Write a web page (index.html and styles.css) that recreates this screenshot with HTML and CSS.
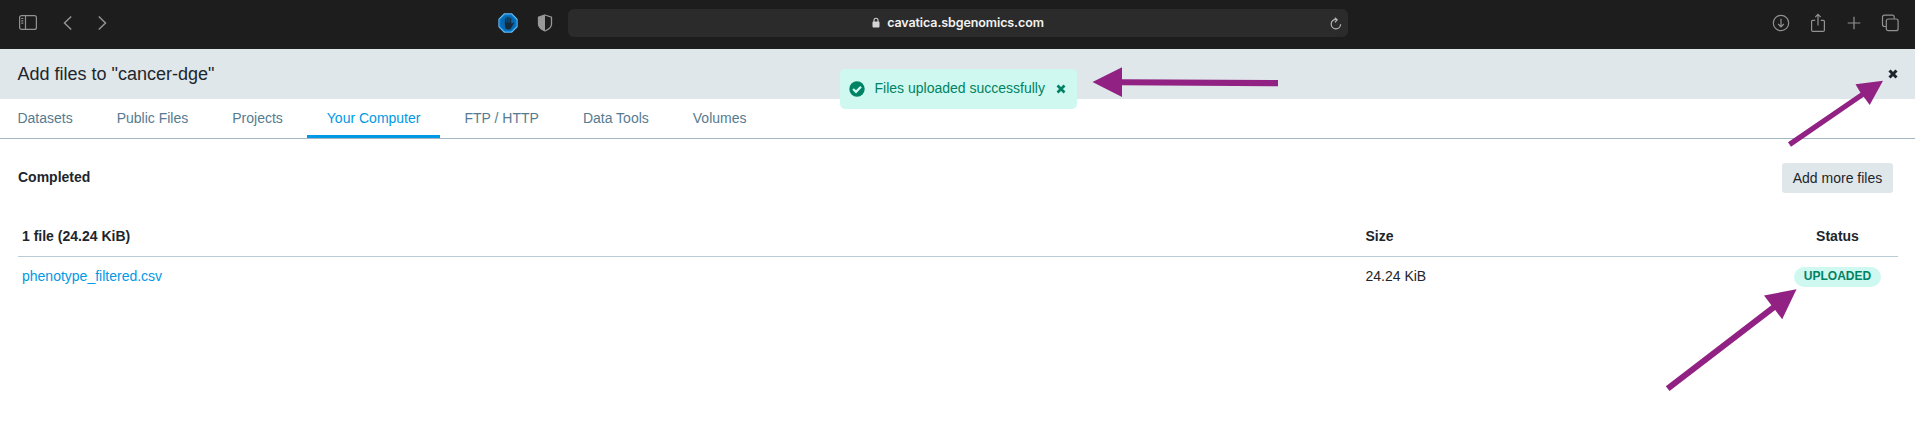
FILE: index.html
```html
<!DOCTYPE html>
<html lang="en">
<head>
<meta charset="utf-8">
<title>Add files</title>
<link rel="stylesheet" href="styles.css">
</head>
<body>
<header class="browser">
  <div class="browser-left">
    <div class="nav-icons">
      <svg class="icon" width="20" height="18" viewBox="0 0 20 18"><rect x="1.600" y="1.600" width="16.800" height="13.800" rx="2"/><path d="M7.500 1.600v13.800M3.300 4.500h2M3.300 6.800h2M3.300 9.100h2"/></svg>
      <svg class="icon chevron" width="10" height="18" viewBox="0 0 10 18"><path d="M8.200 2.500 1.500 9l6.700 6.500"/></svg>
      <svg class="icon chevron" width="10" height="18" viewBox="0 0 10 18"><path d="M1.800 2.500 8.500 9l-6.700 6.500"/></svg>
    </div>
    <div class="ext-icons">
      <svg width="20" height="20" viewBox="0 0 20 20"><path d="M6.300 1h7.400L19 6.300v7.400L13.700 19H6.300L1 13.700V6.300z" fill="#0868ae" stroke="#61bbf7" stroke-width="1.300"/><path d="M6.700 2h6.600L18 6.700v6.600L13.300 18H6.700L2 13.300V6.700z" fill="none" stroke="#087fd6" stroke-width="1"/><path d="M7.500 10.500V6M9.200 9.800V4.500M11 9.800V4.500M12.700 10.500V5.700" stroke="#152a3a" stroke-width="1.200" stroke-linecap="round"/><path d="M6.900 9.500h6.400v1.700l1.500-1.500c.7-.5 1.300.1.900.8l-2.600 4.400c-.6 1-1.300 1.500-2.600 1.500-2.400 0-3.600-1.500-3.600-4z" fill="#152a3a"/></svg>
      <svg width="16" height="18" viewBox="0 0 16 18"><path d="M8 1 14.500 3.200v7c0 3-2.700 5.200-6.500 6.800-3.800-1.600-6.500-3.800-6.500-6.800v-7z" fill="none" stroke="#989898" stroke-width="1.300"/><path d="M8 1v16c-3.800-1.600-6.500-3.800-6.500-6.800v-7z" fill="#989898"/></svg>
    </div>
  </div>
  <div class="address">
    <span></span>
    <span class="url"><svg width="8" height="11" viewBox="0 0 8 11"><rect x=".5" y="4.500" width="7" height="6" rx="1" fill="#d5d5d5"/><path d="M2 5V3.200a2 2 0 0 1 4 0V5" fill="none" stroke="#d5d5d5" stroke-width="1.100"/></svg>cavatica.sbgenomics.com</span>
    <svg class="reload" width="12" height="13" viewBox="0 0 12 13"><path d="M6.800 2.500C3.500 2 1.200 4.200 1.200 7a4.700 4.700 0 0 0 9.400.2"/><path d="M4.800.7 7.200 2.700 4.900 5.300"/></svg>
  </div>
  <div class="browser-right">
    <svg class="icon" width="18" height="18" viewBox="0 0 18 18"><circle cx="9" cy="9" r="7.700"/><path d="M9 4.800v8M6.200 10 9 12.900l2.800-2.900"/></svg>
    <svg class="icon" width="16" height="20" viewBox="0 0 16 20"><path d="M5.200 7.300H2.600q-1 0-1 1v8.900q0 1.200 1.200 1.200h10.400q1.200 0 1.200-1.200V8.300q0-1-1-1h-2.600M8 12.500V1.700M5.300 4.200 8 1.400l2.700 2.800"/></svg>
    <svg class="icon" width="14" height="14" viewBox="0 0 14 14"><path d="M7 .7v12.600M.7 7h12.600"/></svg>
    <svg class="icon" width="18" height="18" viewBox="0 0 18 18"><rect x="5.300" y="5" width="11.800" height="11.700" rx="2"/><path d="M5 12.500H3.500q-2 0-2-2V3.200q0-2 2-2h7.700q2 0 2 2v1.500"/></svg>
  </div>
</header>

<div class="dialog-header">
  <h1 class="title">Add files to "cancer-dge"</h1>
  <svg class="cross" width="10" height="10" viewBox="0 0 10 10"><path d="M1.500 1.500l7 7M8.500 1.500l-7 7"/></svg>
  <div class="toast">
    <svg width="16" height="16" viewBox="0 0 16 16"><circle cx="8" cy="8" r="7.700" fill="#008264"/><path d="M4.100 8 7 10.800l5-5" fill="none" stroke="#cff9f0" stroke-width="2.300"/></svg>
    <span class="toast-text">Files uploaded successfully</span>
    <svg class="cross toast-cross" width="10" height="10" viewBox="0 0 10 10"><path d="M1.500 1.500l7 7M8.500 1.500l-7 7"/></svg>
  </div>
</div>

<nav class="tabs">
  <a class="tab">Datasets</a>
  <a class="tab">Public Files</a>
  <a class="tab">Projects</a>
  <a class="tab tab-active">Your Computer</a>
  <a class="tab">FTP / HTTP</a>
  <a class="tab">Data Tools</a>
  <a class="tab">Volumes</a>
</nav>

<main class="content">
  <div class="toolbar">
    <h2 class="section">Completed</h2>
    <button class="button">Add more files</button>
  </div>
  <div class="row row-head">
    <span>1 file (24.24 KiB)</span><span>Size</span><span class="status">Status</span>
  </div>
  <div class="row">
    <a class="link">phenotype_filtered.csv</a><span>24.24 KiB</span><span class="status"><span class="pill">UPLOADED</span></span>
  </div>
</main>

<svg class="annotations" width="1915" height="445" viewBox="0 0 1915 445">
  <path d="M1092.500 82 1122 67.300V79.300L1278 80v6.200l-156-.9V97z"/>
  <path d="M1883 80.800 1869.700 105l-6-8.300L1791 146.700l-3-4.500 72.500-49.500-5-8.400z"/>
  <path d="M1796.500 289.300 1782.200 319.300l-7-9.300-105.700 81-3.700-4.700 105.600-81.100-7.400-9.700z"/>
</svg>
</body>
</html>
```

FILE: styles.css
```css
* { box-sizing: border-box; }
body {
  margin: 0;
  height: 445px;
  overflow: hidden;
  position: relative;
  background: #fff;
  color: #1d262c;
  font: 14px/20px "Liberation Sans", Arial, sans-serif;
}
svg { display: block; flex: none; }
h1, h2 { margin: 0; }

.browser {
  display: grid;
  grid-template-columns: 568px 780px 1fr;
  height: 49px;
  padding-bottom: 4px;
  align-items: center;
  background: #1d1d1d;
}
.browser-left { display: flex; justify-content: space-between; padding: 0 14px 0 18px; }
.nav-icons, .ext-icons, .browser-right { display: flex; align-items: center; }
.nav-icons { gap: 24.5px; }
.ext-icons { gap: 19px; }
.browser-left .ext-icons { padding-right: 1px; }
.browser-right { justify-content: flex-end; gap: 20.4px; padding-right: 16px; }
.icon { fill: none; stroke: #929292; stroke-width: 1.2; }
.chevron { stroke-width: 1.5; }
.address {
  display: grid;
  grid-template-columns: 1fr auto 1fr;
  align-items: center;
  height: 28px;
  border-radius: 6px;
  padding: 0 6px;
  margin-top: 1px;
  background: #2b2b2b;
}
.url {
  display: flex;
  align-items: center;
  gap: 7px;
  color: #f2f2f2;
  font: 600 12.5px/16px Inter, sans-serif;
  letter-spacing: -0.1px;
  padding-bottom: 1px;
}
.reload { justify-self: end; fill: none; stroke: #b5b5b5; stroke-width: 1.2; }

.dialog-header {
  position: relative;
  display: flex;
  align-items: center;
  justify-content: space-between;
  height: 50px;
  padding: 0 17px 0 17.5px;
  background: #e0e7ea;
}
.title { font-size: 18px; font-weight: 400; }
.cross { fill: none; stroke: #1d262c; stroke-width: 3; }
.toast {
  position: absolute;
  left: 839.5px;
  top: 20px;
  display: flex;
  align-items: center;
  width: 237px;
  height: 40px;
  padding: 0 11px 1px 9px;
  border-radius: 5px;
  background: #cff9f0;
  color: #008264;
}
.toast-text { margin: -1px 0 0 10px; }
.toast-cross { margin-left: auto; stroke: #008264; stroke-width: 2.7; }

.tabs {
  display: flex;
  gap: 4px;
  height: 40px;
  border-bottom: 1px solid #a3b8c3;
}
.tab { padding: 9px 20px 0; color: #567b90; border-bottom: 3px solid transparent; }
.tab:first-child { padding-left: 17.4px; }
.tab-active { color: #0099e5; border-bottom-color: #0099e5; }

.content { padding: 24px 17px 0 18px; }
.toolbar { display: flex; justify-content: space-between; padding-right: 5px; height: 54px; }
.section { font-size: 14px; line-height: 20px; margin-top: 4px; }
.button {
  height: 30px;
  width: 111px;
  padding: 0;
  border: 0;
  border-radius: 3px;
  background: #e0e7ea;
  color: inherit;
  font: inherit;
}
.row {
  display: grid;
  grid-template-columns: 1343.5px 1fr 121px;
  align-items: center;
  height: 40px;
  padding-bottom: 2px;
}
.row > * { padding: 0 4px; }
.row-head { font-weight: 700; border-bottom: 1px solid #b9cbd5; }
.row .status { display: flex; justify-content: center; padding: 0; }
.link { color: #0099e5; }
.pill {
  width: 87px;
  height: 20px;
  margin-top: 2px;
  border-radius: 10px;
  background: #cff9f0;
  color: #008264;
  text-align: center;
  font: 700 12px/19px "Liberation Sans", Arial, sans-serif;
}
.annotations { position: absolute; left: 0; top: 0; fill: #912283; pointer-events: none; }
```
